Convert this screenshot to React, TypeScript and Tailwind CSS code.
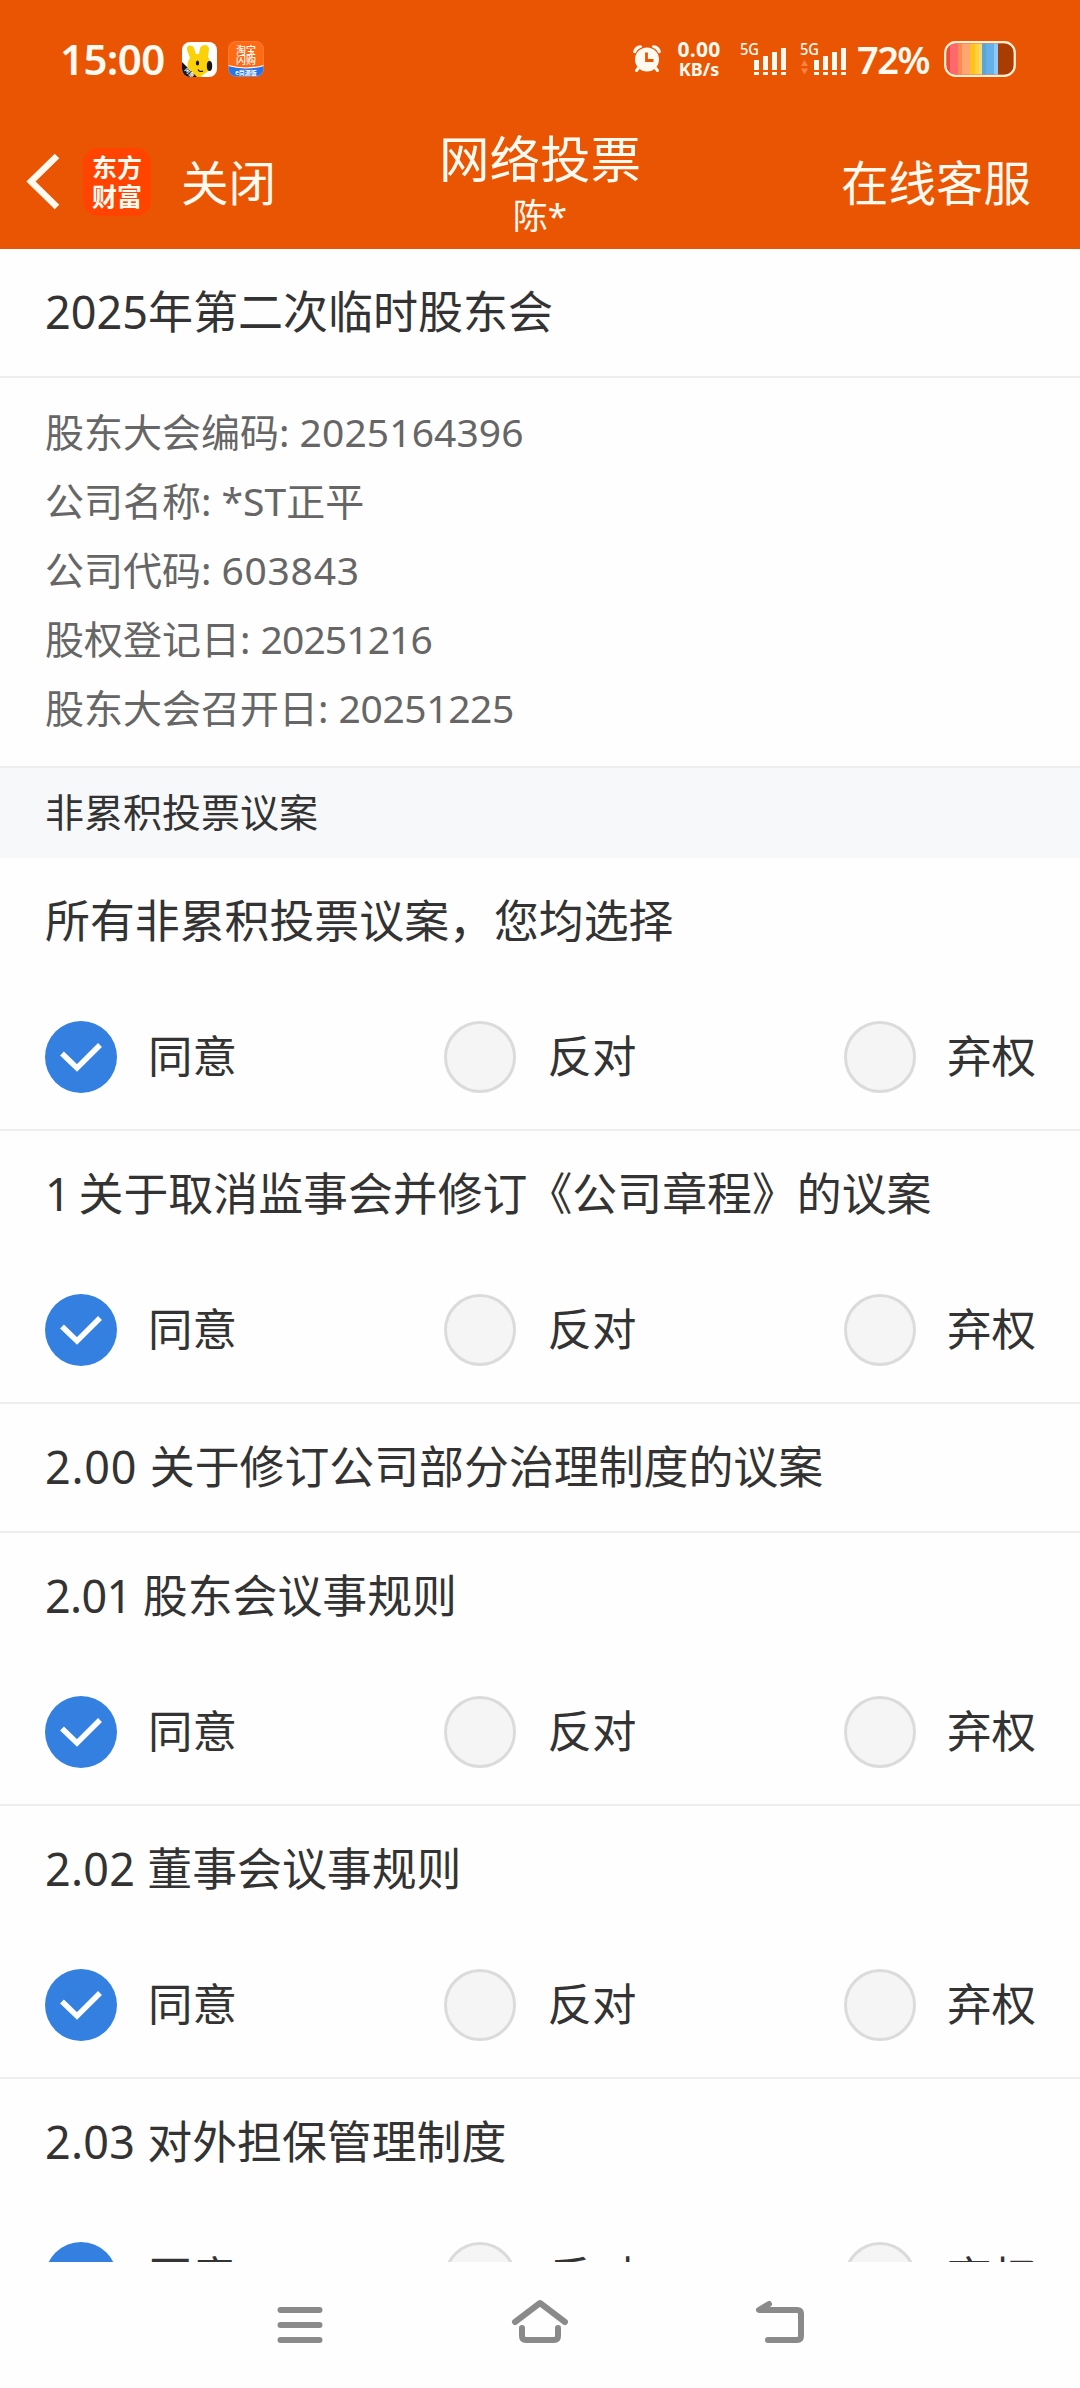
import React, { useState } from "react";
import clsx from "clsx";

const info = [
  { label: "股东大会编码:", value: "2025164396", spacing: "tracking-[0.1px]" },
  { label: "公司名称:", value: "*ST正平", spacing: "" },
  { label: "公司代码:", value: "603843", spacing: "tracking-[0.7px]" },
  { label: "股权登记日:", value: "20251216", spacing: "tracking-[-0.9px]" },
  { label: "股东大会召开日:", value: "20251225", spacing: "tracking-[-0.4px]" },
];

const proposals = [
  { no: "", title: "所有非累积投票议案，您均选择", vote: true, spacing: "" },
  {
    no: "1",
    title: "关于取消监事会并修订《公司章程》的议案",
    vote: true,
    spacing: "tracking-[-1.9px]",
  },
  {
    no: "2.00",
    title: "关于修订公司部分治理制度的议案",
    vote: false,
    spacing: "tracking-[0.8px]",
  },
  {
    no: "2.01",
    title: "股东会议事规则",
    vote: true,
    spacing: "tracking-[-0.6px]",
  },
  {
    no: "2.02",
    title: "董事会议事规则",
    vote: true,
    spacing: "tracking-[0.3px]",
  },
  {
    no: "2.03",
    title: "对外担保管理制度",
    vote: true,
    spacing: "tracking-[0.3px]",
  },
];

const options = ["同意", "反对", "弃权"];

function RabbitIcon() {
  return (
    <svg width="35" height="35" viewBox="0 0 35 35">
      <defs>
        <clipPath id="rabbit">
          <rect width="35" height="35" rx="8" />
        </clipPath>
      </defs>
      <g clipPath="url(#rabbit)">
        <rect width="35" height="35" fill="#fff" />
        <path
          d="M5 8C4 3 10 2 12 6l2 6h3l1-6c2-4 9-4 9 1l-1 8c4 6 4 12-1 15-2 2-5 2-6 5h-8L7 27C4 24 6 19 8 16z"
          fill="#fbd20a"
        />
        <ellipse cx="15.500" cy="21" rx="1.600" ry="2.600" fill="#151515" />
        <ellipse cx="27.500" cy="24" rx="2.700" ry="5" fill="#151515" />
        <path
          d="M16 27.500c1 2 3 2.500 5 1.500"
          stroke="#151515"
          strokeWidth="1.200"
          fill="none"
        />
        <path d="M0 20l15 15H0z" fill="#151515" />
        <text
          x="2"
          y="29"
          transform="rotate(45 3 29)"
          fontSize="5.500"
          fontWeight="700"
          fill="#fff"
          className="font-['Noto_Sans_CJK_SC',sans-serif]"
        >
          闲鱼
        </text>
      </g>
    </svg>
  );
}

function TaobaoIcon() {
  return (
    <svg
      width="36"
      height="36"
      viewBox="0 0 36 36"
      className="font-['Noto_Sans_CJK_SC',sans-serif]"
    >
      <defs>
        <clipPath id="taobao">
          <rect width="36" height="36" rx="8" />
        </clipPath>
      </defs>
      <g clipPath="url(#taobao)">
        <rect width="36" height="36" fill="#ff6a14" />
        <path d="M0 25q18 5 36 0v11H0z" fill="#2476ee" />
        <path d="M0 24.500q18 5 36 0" stroke="#fff" strokeWidth="1.200" fill="none" />
        <g fill="#fff" textAnchor="middle">
          <text x="18" y="12.500" fontSize="10" fontWeight="500">
            淘宝
          </text>
          <text x="18" y="22.500" fontSize="10" fontWeight="500">
            闪购
          </text>
          <text x="18" y="33.500" fontSize="6" fontWeight="700">
            e尚源饭
          </text>
        </g>
      </g>
      <rect
        x="0.500"
        y="0.500"
        width="35"
        height="35"
        rx="8"
        fill="none"
        stroke="#f58a4e"
        strokeOpacity="0.600"
      />
    </svg>
  );
}

function AlarmIcon() {
  return (
    <svg width="28" height="28" viewBox="0 0 28 28">
      <g stroke="#fffaf0" strokeLinecap="round" fill="none">
        <path d="M2 6.500Q3 2.500 7.500 2" strokeWidth="3.500" />
        <path d="M26 6.500Q25 2.500 20.500 2" strokeWidth="3.500" />
      </g>
      <circle cx="14" cy="14.500" r="13.200" fill="#ea5504" />
      <path
        d="M5.500 23l-2 2.500M22.500 23l2 2.500"
        stroke="#fffaf0"
        strokeWidth="3"
        strokeLinecap="round"
      />
      <circle cx="14" cy="14.500" r="12" fill="#fffaf0" />
      <path d="M13.500 7.500v8h7" stroke="#ea5504" strokeWidth="2.800" fill="none" />
    </svg>
  );
}

function SignalIcon({ arrows }: { arrows?: boolean }) {
  return (
    <svg
      width="48"
      height="36"
      viewBox="0 0 48 36"
      fill="#fffaf0"
      className="overflow-visible"
    >
      <text
        x="0"
        y="13.500"
        fontSize="16.500"
        fontWeight="500"
        textLength="19"
        lengthAdjust="spacingAndGlyphs"
        className="font-['Noto_Sans',sans-serif]"
      >
        5G
      </text>
      {arrows && (
        <path d="M1 25l3.500-6L8 25zM1 27.500l3.500 6 3.500-6z" fill="#ff8240" />
      )}
      <path d="M14 19h5v10h-5zM23 15h5v14h-5zM32 11h5v18h-5zM41 7h5v22h-5z" />
      <path d="M14 31h5v3h-5zM23 31h5v3h-5zM32 31h5v3h-5zM41 31h5v3h-5z" />
    </svg>
  );
}

function BatteryIcon() {
  return (
    <svg width="72" height="36" viewBox="0 0 72 36">
      <defs>
        <clipPath id="battery">
          <rect x="2.500" y="2.500" width="67" height="31" rx="9" />
        </clipPath>
      </defs>
      <g clipPath="url(#battery)">
        <rect width="72" height="36" fill="#a93c03" />
        <rect x="2" width="4" height="36" fill="#f04a3c" />
        <rect x="6" width="8" height="36" fill="#ff686c" />
        <rect x="14" width="4" height="36" fill="#ff8a50" />
        <rect x="18" width="8" height="36" fill="#ffa672" />
        <rect x="26" width="5" height="36" fill="#ffc21f" />
        <rect x="31" width="4" height="36" fill="#ffd23c" />
        <rect x="35" width="3" height="36" fill="#f3da78" />
        <rect x="38" width="4" height="36" fill="#5ca6d6" />
        <rect x="42" width="8" height="36" fill="#64b0e8" />
        <rect x="50" width="4" height="36" fill="#8ccafc" />
      </g>
      <rect
        x="1.200"
        y="1.200"
        width="69.600"
        height="33.600"
        rx="10.500"
        fill="none"
        stroke="#fff0d8"
        strokeWidth="2.200"
      />
    </svg>
  );
}

function StatusBar() {
  return (
    <div className="flex h-[84px] items-center justify-between pt-[34px] pr-16 pl-[60px]">
      <div className="flex items-center">
        <p className="w-[122px] text-[42px] leading-[50px] font-semibold tracking-[-0.6px]">
          15:00
        </p>
        <RabbitIcon />
        <div className="ml-[11px]">
          <TaobaoIcon />
        </div>
      </div>
      <div className="flex items-center">
        <AlarmIcon />
        <div className="ml-[13px] w-[50px] text-center font-bold">
          <p className="text-[21px] leading-5 tracking-[0.3px]">0.00</p>
          <p className="text-[18px] leading-5">KB/s</p>
        </div>
        <div className="ml-4 flex gap-3">
          <SignalIcon />
          <SignalIcon arrows />
        </div>
        <p className="ml-[9px] w-[87px] text-[38px] leading-[50px] font-semibold tracking-[-1.6px]">
          72%
        </p>
        <BatteryIcon />
      </div>
    </div>
  );
}

function Header() {
  return (
    <header className="h-[249px] bg-[#ea5504] text-[#fffaf0]">
      <StatusBar />
      <div className="grid h-[165px] grid-cols-[1fr_auto_1fr]">
        <div className="flex items-start pl-[26px]">
          <svg
            width="36"
            height="60"
            viewBox="0 0 36 60"
            className="mt-[67px]"
            fill="none"
            stroke="#fffaf0"
            strokeWidth="6.500"
          >
            <path d="M31 5L5 30.500 31 56" />
          </svg>
          <div className="mt-16 ml-[21px] flex h-[68px] w-[68px] flex-col items-center justify-center rounded-[15px] bg-[#ff4300] pb-0.5 font-['Noto_Sans_CJK_SC',sans-serif] text-[25px] leading-[29px] font-bold">
            <span>东方</span>
            <span>财富</span>
          </div>
          <p className="mt-[69px] ml-[30px] text-[47.5px] leading-[60px]">关闭</p>
        </div>
        <div className="flex flex-col items-center">
          <h1 className="mt-[45px] text-[50.5px] leading-[60px]">网络投票</h1>
          <p className="mt-[7px] text-[35px] leading-[40px]">陈*</p>
        </div>
        <p className="mt-[69px] pr-[49px] text-right text-[47.5px] leading-[60px]">
          在线客服
        </p>
      </div>
    </header>
  );
}

function Radio({
  label,
  checked,
  onClick,
}: {
  label: string;
  checked: boolean;
  onClick: () => void;
}) {
  return (
    <button type="button" onClick={onClick} className="flex items-center gap-[31px]">
      <span
        className={clsx(
          "flex h-[72px] w-[72px] items-center justify-center rounded-full",
          checked ? "bg-[#3480e0]" : "border-[3px] border-[#dbdbdb] bg-[#f5f5f5]"
        )}
      >
        {checked && (
          <svg
            width="44"
            height="34"
            viewBox="0 0 44 34"
            fill="none"
            stroke="#fff"
            strokeWidth="5.500"
          >
            <path d="M3 13.500L18 28 41 5" />
          </svg>
        )}
      </span>
      <span className="pb-0.5 text-[44.5px] leading-[60px]">{label}</span>
    </button>
  );
}

function Proposal({ item }: { item: (typeof proposals)[number] }) {
  const [choice, setChoice] = useState(0);

  return (
    <div
      className={clsx(
        "border-b-2 border-[#eeeeee] pt-[33px] pr-11 pl-[45px]",
        item.vote ? "pb-9" : "pb-[34px]"
      )}
    >
      <p className="text-[44.9px] leading-[60px] whitespace-nowrap">
        {item.no && <span className={item.spacing}>{item.no} </span>}
        {item.title}
      </p>
      {item.vote && (
        <div className="mt-[70px] flex justify-between">
          {options.map((option, index) => (
            <Radio
              key={option}
              label={option}
              checked={choice === index}
              onClick={() => setChoice(index)}
            />
          ))}
        </div>
      )}
    </div>
  );
}

function NavBar() {
  return (
    <nav className="flex h-[126px] items-center justify-center">
      <div className="grid w-[720px] grid-cols-3 justify-items-center">
        <svg
          width="60"
          height="60"
          viewBox="0 0 60 60"
          stroke="#8a8a8a"
          strokeWidth="6"
          strokeLinecap="round"
        >
          <path d="M10.500 15h39M10.500 30h39M10.500 45h39" />
        </svg>
        <svg
          width="60"
          height="60"
          viewBox="0 0 60 60"
          fill="none"
          stroke="#8a8a8a"
          strokeWidth="6"
          strokeLinecap="round"
          strokeLinejoin="round"
        >
          <path d="M5 27L30 8l25 19" />
          <path d="M12 33v8q0 4 4 4h28q4 0 4-4v-8" />
        </svg>
        <svg
          width="60"
          height="60"
          viewBox="0 0 60 60"
          fill="none"
          stroke="#8a8a8a"
          strokeWidth="6"
          strokeLinecap="round"
          strokeLinejoin="round"
        >
          <path d="M19 9L9 15h38q4 0 4 4v22q0 4-4 4H18" />
        </svg>
      </div>
    </nav>
  );
}

function App() {
  return (
    <div className="flex h-[2388px] w-[1080px] flex-col overflow-hidden bg-[#fefefe] font-['Noto_Sans','Noto_Sans_CJK_SC',sans-serif] text-[#333333]">
      <Header />
      <main className="h-[2013px] overflow-hidden">
        <div className="border-b-2 border-[#eeeeee] px-[45px] pt-[33px] pb-[34px]">
          <h2 className="text-[45px] leading-[60px]">2025年第二次临时股东会</h2>
        </div>
        <div className="border-b-2 border-[#eeeeee] px-[45px] pt-[19px] pb-6 text-[39px] leading-[69px] text-[#666666]">
          {info.map((row) => (
            <p key={row.label}>
              {row.label} <span className={row.spacing}>{row.value}</span>
            </p>
          ))}
        </div>
        <div className="bg-[#f7f8fa] px-[45px] pb-0.5 text-[39px] leading-[88px]">
          非累积投票议案
        </div>
        {proposals.map((item) => (
          <Proposal key={item.title} item={item} />
        ))}
      </main>
      <NavBar />
    </div>
  );
}

export default App;
